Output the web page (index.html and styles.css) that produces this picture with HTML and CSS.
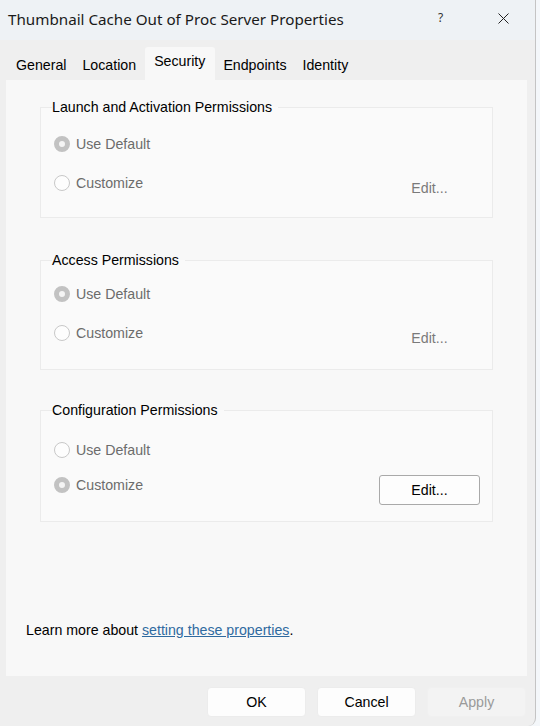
FILE: index.html
```html
<!DOCTYPE html>
<html>
<head>
<meta charset="utf-8">
<link rel="stylesheet" href="styles.css">
</head>
<body>
<div class="dialog">
  <div class="titlebar">
    <span class="title">Thumbnail Cache Out of Proc Server Properties</span>
    <span class="help">?</span>
    <span class="close">
      <svg width="11" height="11" viewBox="0 0 11 11"><path d="M0.5 0.5 L10.5 10.5 M10.5 0.5 L0.5 10.5" stroke="#222" stroke-width="1" fill="none"/></svg>
    </span>
  </div>
  <div class="tabs">
    <div class="tab">General</div>
    <div class="tab">Location</div>
    <div class="tab selected">Security</div>
    <div class="tab">Endpoints</div>
    <div class="tab">Identity</div>
  </div>
  <div class="panel">
    <fieldset class="group group-launch">
      <legend>Launch and Activation Permissions</legend>
      <div class="row">
        <span class="radio checked"></span><span class="label">Use Default</span>
      </div>
      <div class="row row2">
        <span class="radio"></span><span class="label">Customize</span>
        <button class="edit disabled">Edit...</button>
      </div>
    </fieldset>
    <fieldset class="group group-access">
      <legend>Access Permissions</legend>
      <div class="row">
        <span class="radio checked"></span><span class="label">Use Default</span>
      </div>
      <div class="row row2">
        <span class="radio"></span><span class="label">Customize</span>
        <button class="edit disabled">Edit...</button>
      </div>
    </fieldset>
    <fieldset class="group group-config">
      <legend>Configuration Permissions</legend>
      <div class="row">
        <span class="radio"></span><span class="label">Use Default</span>
      </div>
      <div class="row row2">
        <span class="radio checked"></span><span class="label">Customize</span>
        <button class="edit">Edit...</button>
      </div>
    </fieldset>
    <p class="learn">Learn more about <a href="#">setting these properties</a>.</p>
  </div>
  <div class="buttons">
    <button class="btn">OK</button>
    <button class="btn">Cancel</button>
    <button class="btn disabled">Apply</button>
  </div>
</div>
</body>
</html>
```
FILE: styles.css
```css
html, body {
  margin: 0;
  padding: 0;
}
body {
  background: #f4f7fa;
  width: 540px;
  height: 726px;
  overflow: hidden;
  font-family: "Liberation Sans", Arial, sans-serif;
}
.dialog {
  width: 536px;
  height: 726px;
  background: #efefef;
  border-right: 1px solid #c4c4c4;
  border-bottom-right-radius: 8px;
  display: flex;
  flex-direction: column;
  box-sizing: border-box;
}
.titlebar {
  height: 40px;
  background: #eef2f5;
  display: flex;
  align-items: center;
  padding-left: 8px;
  box-sizing: border-box;
}
.title {
  font-family: "Noto Sans", sans-serif;
  font-size: 15.2px;
  color: #1a1a1a;
  flex: 1;
  margin-top: -3px;
}
.help {
  font-family: "Noto Sans", sans-serif;
  font-size: 12px;
  color: #333;
  width: 12px;
  margin-right: 48px;
  margin-top: -6px;
}
.close {
  width: 11px;
  height: 11px;
  margin-right: 26px;
  margin-top: -4px;
  display: flex;
}
.tabs {
  display: flex;
  align-items: flex-end;
  padding-left: 8px;
  height: 40px;
}
.tab {
  font-size: 14.2px;
  color: #000;
  padding: 0 8px;
  height: 30px;
  line-height: 30px;
}
.tab.selected {
  background: #f8f8f8;
  height: 33px;
  line-height: 28px;
  margin: 0 0 0 1px;
  padding: 0 10px 5px 9px;
  box-sizing: border-box;
  border-radius: 3px 3px 0 0;
}
.panel {
  margin-left: 6px;
  width: 521px;
  height: 596px;
  background: #f8f8f8;
  display: flex;
  flex-direction: column;
  padding: 18px 0 36px 20px;
  box-sizing: border-box;
}
.group {
  margin: 0 0 33px 14px;
  width: 453px;
  box-sizing: border-box;
  border: 1px solid #ebebeb;
  background: #fafafa;
  padding: 16px 12px 14px 13px;
  min-width: 0;
}
.group-access {
  padding-top: 13px;
  padding-bottom: 16px;
  margin-bottom: 31px;
}
.group-config {
  padding-top: 19px;
  padding-bottom: 16px;
}
.group-config .row2 {
  margin-top: 3px;
}
.group legend {
  font-size: 14.2px;
  line-height: 18px;
  color: #000;
  padding: 0 6px 0 0;
  margin-left: -2px;
}
.row {
  display: flex;
  align-items: center;
  height: 24px;
}
.row2 {
  height: 40px;
  margin-top: 7px;
}
.radio {
  width: 16px;
  height: 16px;
  border-radius: 50%;
  border: 1px solid #c8c8c8;
  background: #fdfdfd;
  box-sizing: border-box;
  margin-right: 6px;
  flex: none;
}
.radio.checked {
  border: 5px solid #c2c2c2;
  background: #f4f4f4;
}
.label {
  font-size: 14.2px;
  color: #6c6c6c;
}
.edit {
  margin-left: auto;
  margin-top: 10px;
  width: 101px;
  height: 30px;
  font-family: "Liberation Sans", Arial, sans-serif;
  font-size: 14.2px;
  color: #000;
  background: #fdfdfd;
  border: 1px solid #a9a9a9;
  border-radius: 3px;
  padding: 0;
}
.edit.disabled {
  background: transparent;
  border-color: transparent;
  color: #7a7a7a;
}
.learn {
  margin: auto 0 0 0;
  font-size: 14.2px;
  line-height: 20px;
  color: #000;
}
.learn a {
  color: #2f6aa0;
  text-decoration: underline;
}
.buttons {
  display: flex;
  justify-content: flex-end;
  gap: 11px;
  padding: 11px 9px 0 0;
}
.btn {
  width: 99px;
  height: 30px;
  font-family: "Liberation Sans", Arial, sans-serif;
  font-size: 14.2px;
  color: #000;
  background: #fdfdfd;
  border: 1px solid #ececec;
  border-radius: 4px;
  padding: 0;
}
.btn.disabled {
  background: #f3f3f3;
  border-color: #f0f0f0;
  color: #9a9a9a;
}
```
